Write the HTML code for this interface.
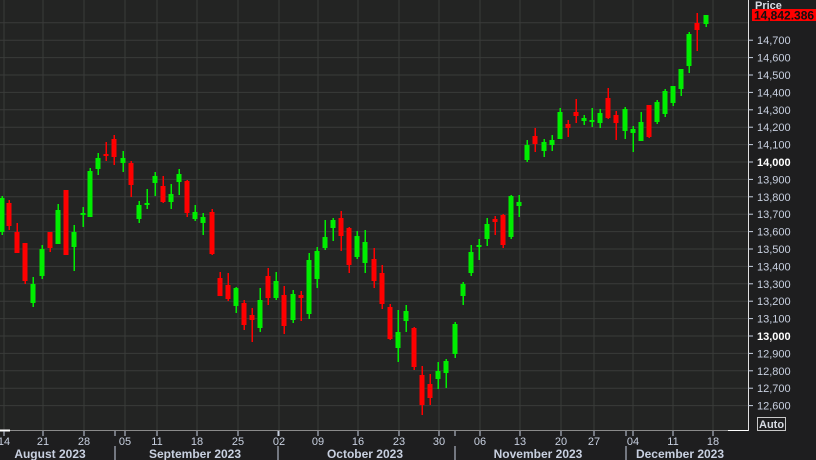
<!DOCTYPE html>
<html><head><meta charset="utf-8">
<style>
html,body{margin:0;padding:0;background:#1e1e1f;width:816px;height:460px;overflow:hidden}
svg{display:block}
text{font-family:"Liberation Sans","DejaVu Sans",sans-serif}
</style></head>
<body>
<svg id="s" width="816" height="460" xmlns="http://www.w3.org/2000/svg">
<rect x="0" y="0" width="748" height="430" fill="#232423"/>
<g id="grid"></g>
<g id="candles"></g>
<line x1="748.5" y1="0" x2="748.5" y2="431" stroke="#e0e0e0" stroke-width="1"/>
<line x1="0" y1="430.5" x2="748" y2="430.5" stroke="#8a8a8a" stroke-width="1"/>
<line x1="0" y1="430.5" x2="10" y2="430.5" stroke="#ffffff" stroke-width="2"/>
<line x1="728" y1="430.5" x2="748" y2="430.5" stroke="#ffffff" stroke-width="1"/>
<g id="axis"></g>
<text x="755" y="9" font-size="11" font-weight="bold" fill="#d8dce4">Price</text>
<rect x="752" y="9" width="64" height="12" fill="#ff0000"/>
<text x="754" y="19.5" font-size="12" font-weight="bold" fill="#101010">14,842.386</text>
<rect x="757.5" y="417.5" width="28" height="13" fill="none" stroke="#c8c8c8"/>
<text x="759" y="428" font-size="11" font-weight="bold" fill="#d8dce4">Auto</text>
</svg>
<script>
var NS="http://www.w3.org/2000/svg";
function el(p,t,a,txt){var e=document.createElementNS(NS,t);for(var k in a)e.setAttribute(k,a[k]);if(txt)e.textContent=txt;document.getElementById(p).appendChild(e);}
// horizontal grid + price labels
for(var p=12600;p<=14800;p+=100){
 var y=162-(p-14000)*0.174;
 el("grid","line",{x1:0,x2:748,y1:y,y2:y,stroke:"#3a3b3a","stroke-width":1});
 if(p<=14700){
 el("axis","line",{x1:748,x2:753,y1:y,y2:y,stroke:"#c8d0e0","stroke-width":1});
 var bold=(p%1000==0);
 el("axis","text",{x:757,y:y+4,"font-size":11,fill:bold?"#ffffff":"#c8d0e0","font-weight":bold?"bold":"normal"},(p/1000|0)+","+String(p%1000).padStart(3,"0"));
 }
}
var ticks=[[4,"14"],[43,"21"],[84,"28"],[125,"05"],[157,"11"],[197,"18"],[238,"25"],[279,"02"],[318,"09"],[358,"16"],[399,"23"],[439,"30"],[480,"06"],[520,"13"],[561,"20"],[594,"27"],[633,"04"],[673,"11"],[713,"18"]];
ticks.forEach(function(t){
 el("grid","line",{x1:t[0],x2:t[0],y1:0,y2:430,stroke:"#3a3b3a","stroke-width":1});
 el("axis","line",{x1:t[0],x2:t[0],y1:431,y2:436,stroke:"#c8d0e0"});
 el("axis","text",{x:t[0],y:445,"font-size":11,fill:"#c8d0e0","text-anchor":"middle"},t[1]);
});
[115,278,455,626].forEach(function(x){
 el("axis","line",{x1:x,x2:x,y1:431,y2:436,stroke:"#c8d0e0"});
 el("axis","line",{x1:x,x2:x,y1:446,y2:460,stroke:"#c8d0e0"});
});
[[50,"August 2023"],[195,"September 2023"],[365,"October 2023"],[538,"November 2023"],[680,"December 2023"]].forEach(function(m){
 el("axis","text",{x:m[0],y:458,"font-size":12,"font-weight":"bold",fill:"#c8d0e0","text-anchor":"middle"},m[1]);
});
// x, wickTop, wickBot, bodyTop, bodyBot, green?
var C=[
[2,196,235,198,232,1],[9,200,230,203,226,0],[17,223,253,232,253,0],[25,243,284,243,281,0],[33,277,307,284,303,1],
[42,245,279,249,276,1],[50,232,252,232,248,0],[58,204,244,210,244,1],[66,190,255,190,255,0],[74,225,271,232,247,1],
[83,207,227,213,215,1],[90,168,217,171,217,1],[98,153,175,158,169,1],[106,142,161,154,156,0],[114,135,165,139,157,0],
[123,151,172,158,163,1],[131,161,197,163,185,0],[139,201,223,205,219,1],[147,189,209,203,205,1],[155,172,196,176,183,1],
[163,176,203,186,202,0],[171,184,209,194,202,1],[179,169,195,174,182,1],[187,180,217,181,213,0],[195,205,221,212,219,1],
[203,213,235,217,223,1],[212,209,255,212,254,0],[220,272,296,278,296,0],[228,273,301,285,299,0],[236,287,313,288,306,1],
[244,300,330,303,325,0],[252,308,342,315,320,0],[260,288,332,300,328,1],[268,268,305,276,298,0],[276,272,300,281,298,1],
[284,286,334,295,326,0],[293,290,323,294,320,1],[301,291,321,295,298,0],[309,253,319,260,314,1],[317,247,288,251,279,1],
[325,220,250,237,248,1],[333,218,241,220,228,1],[341,211,251,218,236,0],[349,227,273,228,265,0],[357,231,259,236,257,1],
[365,230,273,242,263,1],[374,248,288,259,281,0],[382,265,309,273,304,0],[390,304,340,307,339,0],[398,310,362,332,348,1],
[406,305,332,311,321,1],[414,327,370,328,367,0],[422,366,415,375,405,0],[430,374,405,384,398,0],[438,362,389,371,379,1],
[446,359,388,361,373,1],[455,322,358,324,354,1],[463,282,305,284,296,1],[471,245,276,252,273,1],[479,239,260,245,247,1],
[487,218,246,224,239,1],[495,216,235,219,222,0],[503,214,248,215,245,0],[511,195,239,196,237,1],[519,195,217,202,206,1],
[527,140,162,145,160,1],[535,128,152,136,144,0],[544,139,157,142,151,1],[552,135,151,140,145,1],[560,108,139,112,139,1],
[568,120,137,124,128,0],[576,99,123,112,116,0],[584,115,125,118,121,1],[592,108,127,120,121,1],[600,109,128,113,123,1],
[608,88,119,98,118,0],[616,111,140,115,123,0],[625,107,139,109,131,1],[633,126,152,129,133,1],[641,112,141,122,141,1],
[649,105,138,105,137,0],[657,100,124,102,122,1],[665,89,117,91,114,1],[673,86,106,86,103,1],[681,69,96,69,89,1],
[689,32,73,34,66,1],[697,13,51,23,30,0],[706,15,27,15,24,1]
];
C.forEach(function(c){
 var col=c[5]?"#00ee00":"#ff0000";
 el("candles","rect",{x:c[0]-0.5,y:c[1],width:1.5,height:c[2]-c[1],fill:col});
 var h=Math.max(c[4]-c[3],2);
 el("candles","rect",{x:c[0]-2.5,y:c[3],width:5,height:h,fill:col});
});
</script>
</body></html>
